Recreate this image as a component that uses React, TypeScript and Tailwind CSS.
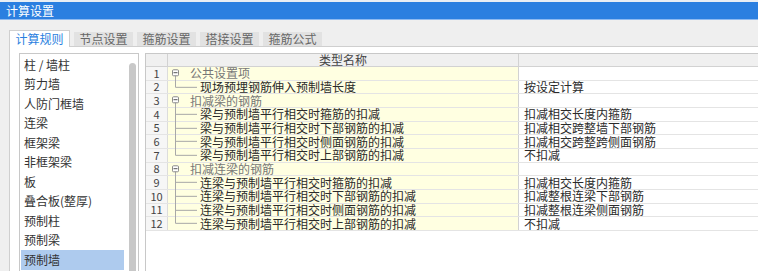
import React from "react";

const FONT = { fontFamily: '"Noto Sans CJK SC", "Noto Sans", sans-serif' };

const TABS = ["计算规则", "节点设置", "箍筋设置", "搭接设置", "箍筋公式"];

const ITEMS = [
  "柱 / 墙柱",
  "剪力墙",
  "人防门框墙",
  "连梁",
  "框架梁",
  "非框架梁",
  "板",
  "叠合板(整厚)",
  "预制柱",
  "预制梁",
  "预制墙",
];

interface Row {
  name: string;
  value: string;
  group?: boolean;
  last?: boolean;
}

const ROWS: Row[] = [
  { name: "公共设置项", value: "", group: true },
  { name: "现场预埋钢筋伸入预制墙长度", value: "按设定计算", last: true },
  { name: "扣减梁的钢筋", value: "", group: true },
  { name: "梁与预制墙平行相交时箍筋的扣减", value: "扣减相交长度内箍筋" },
  { name: "梁与预制墙平行相交时下部钢筋的扣减", value: "扣减相交跨整墙下部钢筋" },
  { name: "梁与预制墙平行相交时侧面钢筋的扣减", value: "扣减相交跨整跨侧面钢筋" },
  { name: "梁与预制墙平行相交时上部钢筋的扣减", value: "不扣减", last: true },
  { name: "扣减连梁的钢筋", value: "", group: true },
  { name: "连梁与预制墙平行相交时箍筋的扣减", value: "扣减相交长度内箍筋" },
  { name: "连梁与预制墙平行相交时下部钢筋的扣减", value: "扣减整根连梁下部钢筋" },
  { name: "连梁与预制墙平行相交时侧面钢筋的扣减", value: "扣减整根连梁侧面钢筋" },
  { name: "连梁与预制墙平行相交时上部钢筋的扣减", value: "不扣减", last: true },
];

// tree connector drawn at the start of each name cell
function TreeGlyph({ row }: { row: Row }) {
  if (row.group) {
    return (
      <svg width="22" className="h-full shrink-0" overflow="visible">
        <line x1="7.5" y1="60%" x2="7.5" y2="120%" stroke="#a8a8a8" strokeWidth="1" />
        <rect x="4.5" y="22%" width="6" height="6" rx="1" fill="#fff" stroke="#8a8a8a" strokeWidth="1" />
        <line x1="5.5" y1="45%" x2="9.5" y2="45%" stroke="#555" strokeWidth="1" />
      </svg>
    );
  }
  return (
    <svg width="32" className="h-full shrink-0" overflow="visible">
      <line x1="7.5" y1="-10%" x2="7.5" y2={row.last ? "50%" : "120%"} stroke="#a8a8a8" strokeWidth="1" />
      <line x1="7.5" y1="50%" x2="29" y2="50%" stroke="#a8a8a8" strokeWidth="1" />
    </svg>
  );
}

export default function App() {
  return (
    <div className="w-[758px] h-[271px] overflow-hidden bg-[#efefef] flex flex-col text-[12px] leading-[12px]" style={FONT}>
      {/* cut-off menu strip */}
      <div className="h-[2px] bg-[#e9eef4] shrink-0" />

      {/* title bar */}
      <div className="h-[17px] shrink-0 bg-[#2b7fe0] flex items-center pl-[6px] text-white">
        计算设置
      </div>
      <div className="h-px shrink-0 bg-[#8fbaf0]" />

      {/* tabs */}
      <div className="flex items-end gap-[4px] pl-[9px] pt-[10px] h-[26px] shrink-0">
        {TABS.map((t, i) =>
          i === 0 ? (
            <div
              key={t}
              className="relative z-10 -mb-px h-[17px] w-[61px] bg-white border border-b-0 border-[#cfcfcf] flex items-center justify-center text-[#2b7fe0]"
            >
              {t}
            </div>
          ) : (
            <div
              key={t}
              className="h-[14px] w-[59px] bg-[#e2e2e2] flex items-center justify-center text-[#666]"
            >
              {t}
            </div>
          )
        )}
      </div>

      {/* content panel */}
      <div className="flex-1 ml-[9px] bg-white border-t border-l border-[#cfcfcf] flex pt-[6px] pl-[9px] min-h-0">
        {/* left list */}
        <div className="w-[120px] shrink-0 border border-b-0 border-[#c8c8c8] flex">
          <div className="flex-1 flex flex-col pt-px pl-px">
            {ITEMS.map((it, i) => (
              <div
                key={it}
                className={
                  "h-[19.5px] shrink-0 flex items-center pl-[3px] mr-[2px] text-[#333] " +
                  (i === ITEMS.length - 1 ? "bg-[#aecbee]" : "")
                }
              >
                {it}
              </div>
            ))}
          </div>
          <div className="w-[12px] shrink-0 flex justify-center pt-[9px]">
            <div className="w-[7px] h-full bg-[#c8c8c8] rounded-t-full" />
          </div>
        </div>

        {/* grid table */}
        <div className="flex-1 ml-[6px] border-l border-t border-[#c8c8c8] flex flex-col min-w-0">
          {/* header */}
          <div className="h-[13px] shrink-0 flex bg-[#f0f0f0] border-b border-[#d2d2d2] text-[#444]">
            <div className="w-[22px] shrink-0 border-r border-[#d2d2d2]" />
            <div className="w-[351px] shrink-0 border-r border-[#d2d2d2] flex items-center justify-center">
              类型名称
            </div>
            <div className="flex-1" />
          </div>
          {ROWS.map((r, i) => (
            <div key={i} className="h-[13.67px] shrink-0 flex border-b border-[#e4e4e4]">
              <div className="w-[22px] shrink-0 bg-[#f6f6f6] border-r border-[#dcdcdc] flex items-center justify-center text-[11px] leading-[11px] text-[#444]">
                {i + 1}
              </div>
              <div className="w-[351px] shrink-0 bg-[#ffffe1] border-r border-[#d2d2d2] flex items-center whitespace-nowrap">
                <TreeGlyph row={r} />
                <span className={r.group ? "text-[#777]" : "text-[#2a2a2a]"}>{r.name}</span>
              </div>
              <div className="flex-1 flex items-center pl-[5px] text-[#2a2a2a] whitespace-nowrap">{r.value}</div>
            </div>
          ))}
          <div className="flex-1" />
        </div>
      </div>
    </div>
  );
}
